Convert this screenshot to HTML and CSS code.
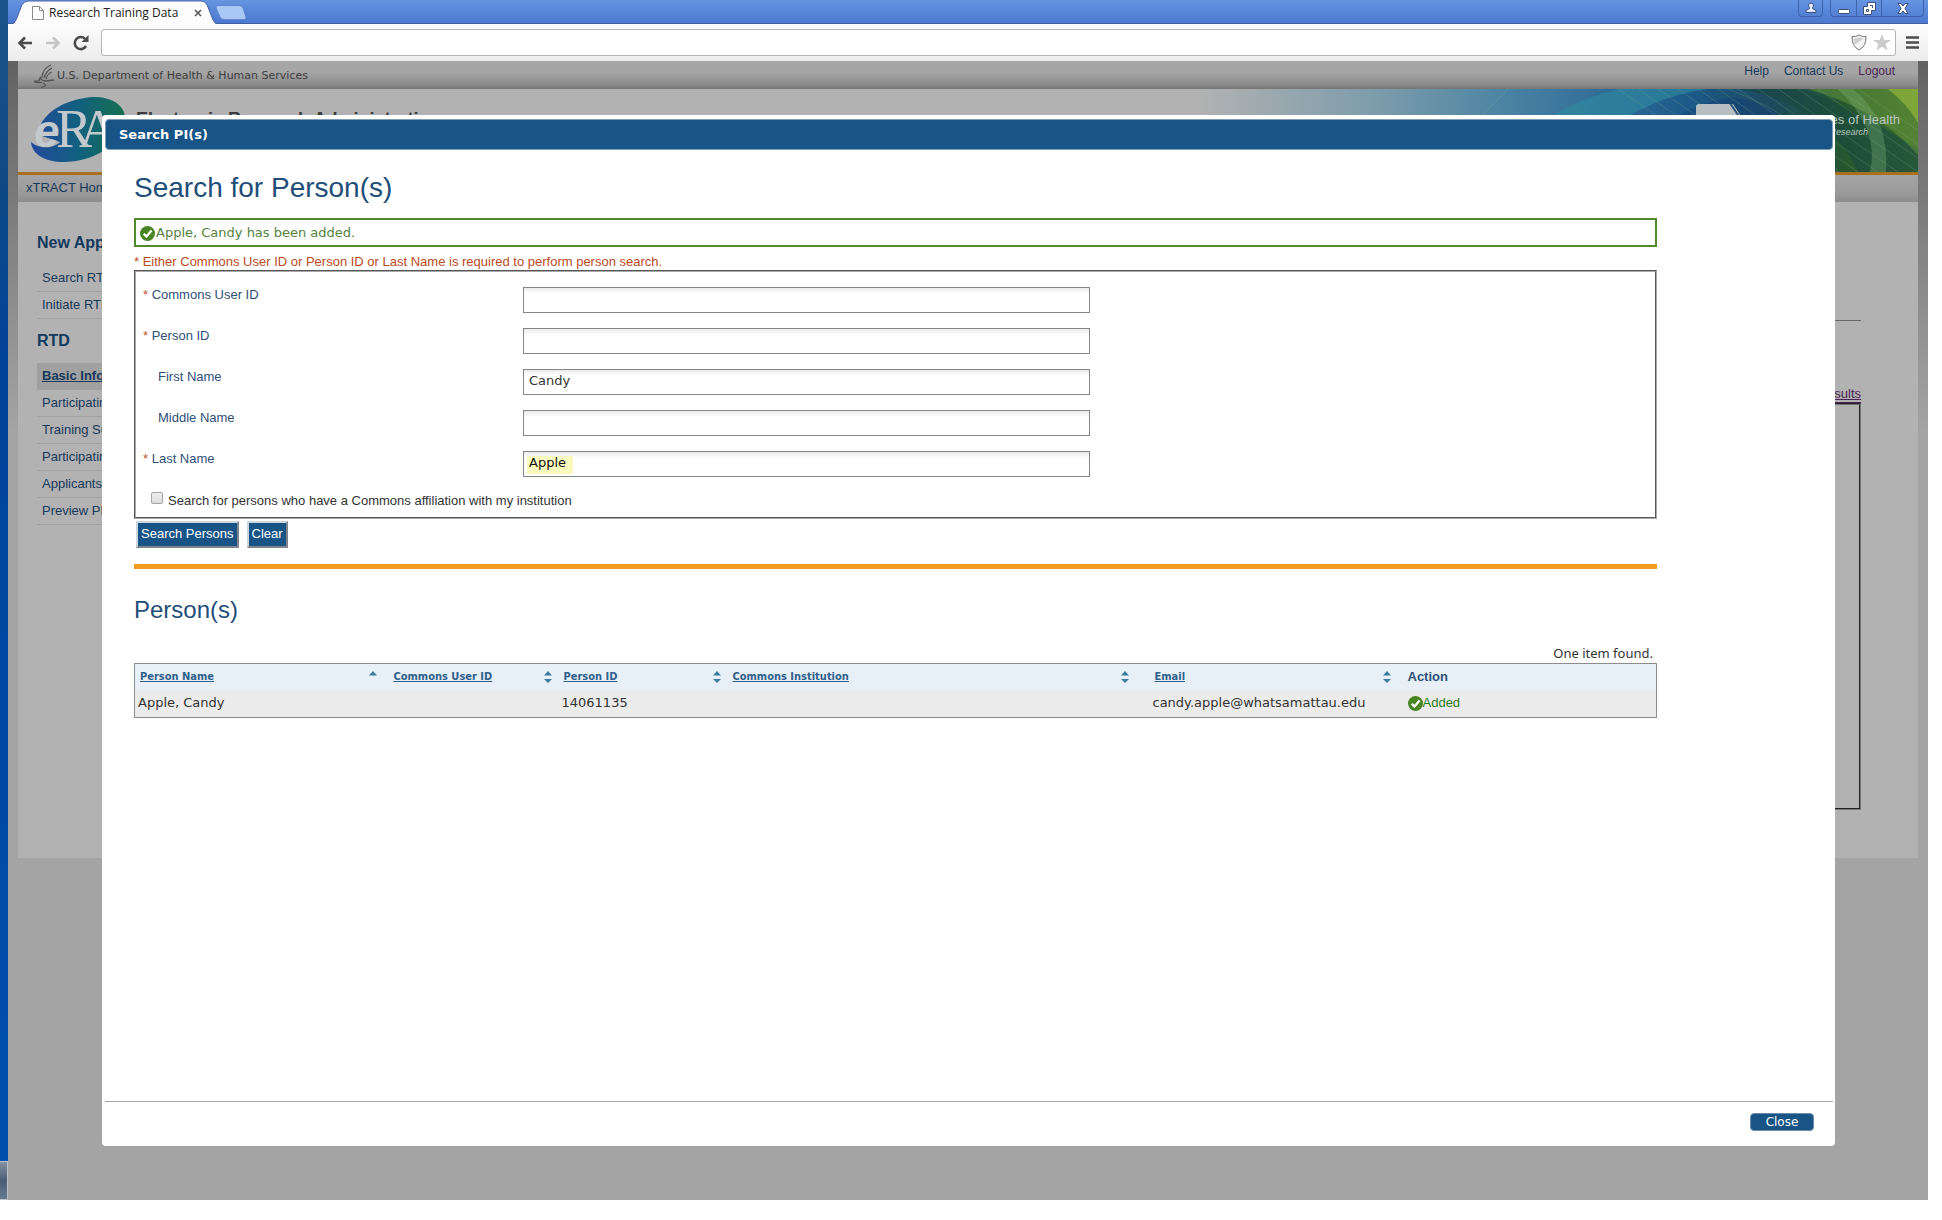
FILE: index.html
```html
<!DOCTYPE html>
<html lang="en">
<head>
    <meta charset="UTF-8">
    <meta name="viewport" content="width=device-width, initial-scale=1.0">
    <title>Research Training Data</title>
    <link rel="stylesheet" href="styles.css">
</head>
<body>
    <!-- Shared icons -->
    <svg class="defs" width="0" height="0" aria-hidden="true">
        <symbol id="check" viewBox="0 0 14 14">
            <circle cx="7" cy="7" r="7" fill="#4a8523"/>
            <path d="M3.5 7.2 6 9.8 10.8 4.2" fill="none" stroke="#fff" stroke-width="2.2"/>
        </symbol>
        <symbol id="sort" viewBox="0 0 8 12">
            <path d="M4 0 8 4.5H0zM4 12 0 8h8z" fill="#3a7ba0"/>
        </symbol>
        <symbol id="sort-up" viewBox="0 0 8 12">
            <path d="M4 0 8 4.5H0z" fill="#3a7ba0"/>
        </symbol>
    </svg>

    <div class="screen">
        <div class="desktop-edge"><div class="taskbar"></div></div>

        <div class="browser">
            <!-- Browser tab strip -->
            <div class="titlebar">
                <div class="tab">
                    <svg class="tab-shape" viewBox="0 0 212 24" preserveAspectRatio="none" aria-hidden="true">
                        <path d="M0 25C6 25 7 22 9 18L14 5Q16 1 21 1H195Q199 1 201 5L207 20Q209 24 212 25Z" fill="#fdfdfd" stroke="#4a63a0"/>
                    </svg>
                    <svg class="page-icon" width="12" height="14" viewBox="0 0 12 14" aria-hidden="true">
                        <path d="M.5.5H7.500L11.500 4.500V13.500H.5zM7.500.5V4.500H11.500" fill="#fff" stroke="#8a8a8a"/>
                    </svg>
                    <span class="tab-title">Research Training Data</span>
                    <button class="tab-close" type="button" aria-label="Close tab">
                        <svg width="8" height="8" viewBox="0 0 8 8"><path d="M1 1 7 7M7 1 1 7" stroke="#555" stroke-width="1.6"/></svg>
                    </button>
                </div>
                <button class="new-tab" type="button" aria-label="New tab">
                    <svg width="32" height="15" viewBox="0 0 32 15"><path d="M3 .5H24Q27 .5 28 3L31 12Q31.500 14.500 29 14.500H9Q6 14.500 5 12L1 3Q.5.5 3 .5Z" fill="#a9c8f5" stroke="#5f86cf"/></svg>
                </button>
                <div class="window-buttons">
                    <button type="button" class="user" aria-label="User"><svg width="12" height="12" viewBox="0 0 12 12"><path d="M6 1a2.500 2.500 0 0 1 1.500 4.500V6.500L11 8.500V10.500H1V8.500L4.500 6.500V5.500A2.500 2.500 0 0 1 6 1Z" fill="#dfe9fb" stroke="#3d4f7c"/></svg></button>
                    <div class="group">
                        <button type="button" aria-label="Minimize"><svg width="12" height="12" viewBox="0 0 12 12"><rect x=".5" y="7.500" width="11" height="4" rx="1" fill="#fff" stroke="#3d4f7c"/></svg></button>
                        <button type="button" aria-label="Restore"><svg width="13" height="13" viewBox="0 0 13 13"><path d="M4.500.5H12.500V8.500H8.500V12.500H.5V4.500H4.500Z" fill="#fff" stroke="#3d4f7c"/><path d="M3.500 7.500H5.500V9.500H3.500ZM7 3.500H9.500V6" fill="none" stroke="#3d4f7c"/></svg></button>
                        <button type="button" class="wide" aria-label="Close"><svg width="12" height="11" viewBox="0 0 12 11"><path d="M1 .5H4L6 3 8 .5H11L8 5.500 11 10.500H8L6 8 4 10.500H1L4 5.500Z" fill="#fff" stroke="#3d4f7c"/></svg></button>
                    </div>
                </div>
            </div>

            <!-- Browser toolbar -->
            <div class="toolbar">
                <button type="button" aria-label="Back"><svg width="16" height="14" viewBox="0 0 16 14"><path d="M15 7H3M8 1.500 2.500 7 8 12.500" fill="none" stroke="#4c4c4c" stroke-width="2.600"/></svg></button>
                <button type="button" aria-label="Forward"><svg width="16" height="14" viewBox="0 0 16 14"><path d="M1 7H13M8 1.500 13.500 7 8 12.500" fill="none" stroke="#c4c4c4" stroke-width="2.600"/></svg></button>
                <button type="button" aria-label="Reload"><svg width="16" height="16" viewBox="0 0 16 16"><path d="M13 11A6 6 0 1 1 12 3.800" fill="none" stroke="#4c4c4c" stroke-width="2.600"/><path d="M15.500 0V7H8.500Z" fill="#4c4c4c"/></svg></button>
                <div class="address">
                    <input type="text" aria-label="Address">
                    <svg width="16" height="17" viewBox="0 0 16 17" aria-hidden="true"><path d="M8 1Q11 3 15 2.500 15.500 12 8 16 .5 12 1 2.500 5 3 8 1Z" fill="#f4f4f4" stroke="#777"/><path d="M8 3Q10 4.500 13 4.500L3 11Q2.500 8 2.800 4.500 6 4.500 8 3Z" fill="#cfcfcf"/></svg>
                    <svg width="18" height="17" viewBox="0 0 18 17" aria-hidden="true"><path d="M9 0 11.300 6H18L12.700 10 14.600 16.500 9 12.700 3.400 16.500 5.300 10 0 6H6.700Z" fill="#ccc"/></svg>
                </div>
                <button class="menu" type="button" aria-label="Menu"><svg width="13" height="13" viewBox="0 0 13 13"><path d="M0 1.500H13M0 6.500H13M0 11.500H13" stroke="#4c4c4c" stroke-width="2.600"/></svg></button>
            </div>

            <!-- Dimmed page behind the dialog -->
            <div class="viewport">
                <div class="site">
                    <div class="hhs-bar">
                        <svg width="20" height="24" viewBox="0 0 20 24" fill="none" stroke="#555" aria-hidden="true"><path d="M17 1Q9 4 8 13M18 4Q12 7 10 14M18 8Q13 10 12 15M6 13Q7 17 12 17L20 16M8 13Q5 14 5 17L0 17.500Q3 19 8 18.500M9 19Q12 20 11 22L7 23.500" stroke-width="1.300"/></svg>
                        <span>U.S. Department of Health &amp; Human Services</span>
                        <nav class="top-links">
                            <a href="#">Help</a>
                            <a href="#">Contact Us</a>
                            <a href="#" class="visited">Logout</a>
                        </nav>
                    </div>
                    <header class="banner">
                        <svg class="era-logo" width="106" height="68" viewBox="0 0 106 68" aria-label="eRA">
                            <defs>
                                <linearGradient id="era"><stop offset="0" stop-color="#23499b"/><stop offset=".5" stop-color="#12607f"/><stop offset="1" stop-color="#16704f"/></linearGradient>
                            </defs>
                            <path d="M10 30C20 8 50 1 66 1 88 2 96 14 95 24 92 50 62 66 34 66 14 66 2 58 1 46 10 54 24 52 30 46L12 40Z" fill="url(#era)"/>
                            <text x="4" y="51" class="era-e">e</text>
                            <text x="26 49" y="51" class="era-ra">RA</text>
                        </svg>
                        <span class="site-name">Electronic Research Administration</span>
                        <div class="banner-art">
                            <svg viewBox="0 0 720 83" preserveAspectRatio="xMaxYMid slice" aria-hidden="true">
                                <defs>
                                    <linearGradient id="art"><stop offset="0" stop-color="#b2b2b2"/><stop offset=".25" stop-color="#7c9cab"/><stop offset=".45" stop-color="#4580a2"/><stop offset=".68" stop-color="#1c5a8a"/><stop offset=".8" stop-color="#1c4a5c"/><stop offset=".9" stop-color="#26572f"/><stop offset="1" stop-color="#3f7030"/></linearGradient>
                                </defs>
                                <rect width="720" height="83" fill="url(#art)"/>
                                <path d="M360 83Q430 10 510 0H420Q340 20 290 83Z" fill="#2f8aa0" opacity=".6"/>
                                <path d="M430 83Q460 20 535 8 600 20 640 83Z" fill="#123f78" opacity=".45"/>
                                <path d="M540 0Q630 15 660 83H720V60Q640 10 600 0Z" fill="#19483f" opacity=".6"/>
                                <path d="M610 0Q680 20 720 66V0Z" fill="#5f8f38" opacity=".6"/>
                                <path d="M690 0Q710 16 720 34V0Z" fill="#93b53c" opacity=".7"/>
                                <path d="M640 0Q682 40 672 83H688Q692 30 655 0Z" fill="#7ab075" opacity=".35"/>
                                <path d="M530 0Q610 30 640 83M280 30Q300 10 310 0M420 0 540 83M440 0 560 83M460 0 580 83M480 0 600 83M500 0 620 83M520 0 640 83M540 0 660 83M560 0 680 83M580 0 700 83M600 0 720 83M620 0 740 83M640 0 760 83M660 0 780 83" fill="none" stroke="#9fc6a0" opacity=".2"/>
                            </svg>
                            <svg class="nih" width="50" height="34" viewBox="0 0 50 34" aria-label="NIH"><path d="M3 0H37L48 17 37 34H3Q0 34 0 31V3Q0 0 3 0Z" fill="#b6bec2"/><path d="M34 -1 46 17" stroke="#26557a" stroke-width="2"/><text x="4" y="25" class="nih-text">NIH</text></svg>
                            <div class="nih-name">National Institutes of Health<em>Office of Extramural Research</em></div>
                        </div>
                    </header>
                    <nav class="site-nav"><a href="#">xTRACT Home</a></nav>
                    <div class="site-body">
                        <aside class="side">
                            <h2>New Application</h2>
                            <ul>
                                <li><a href="#">Search RTD</a></li>
                                <li><a href="#">Initiate RTD</a></li>
                            </ul>
                            <h2>RTD</h2>
                            <ul>
                                <li class="current"><a href="#">Basic Information</a></li>
                                <li><a href="#">Participating Faculty</a></li>
                                <li><a href="#">Training Support</a></li>
                                <li><a href="#">Participating Students</a></li>
                                <li><a href="#">Applicants</a></li>
                                <li><a href="#">Preview PDF</a></li>
                            </ul>
                        </aside>
                        <main class="behind">
                            <hr>
                            <a href="#">Search Results</a>
                            <div class="results-box"></div>
                        </main>
                    </div>
                </div>

                <!-- Search dialog -->
                <div class="dialog" role="dialog" aria-label="Search PI(s)">
                    <div class="dialog-title">Search PI(s)</div>
                    <div class="dialog-body">
                        <h1>Search for Person(s)</h1>
                        <div class="message"><svg class="check"><use href="#check"/></svg>Apple, Candy has been added.</div>
                        <p class="hint">* Either Commons User ID or Person ID or Last Name is required to perform person search.</p>
                        <form>
                            <div class="fields">
                                <div class="field">
                                    <label for="user-id"><i>*</i> Commons User ID</label>
                                    <input type="text" id="user-id">
                                </div>
                                <div class="field">
                                    <label for="person-id"><i>*</i> Person ID</label>
                                    <input type="text" id="person-id">
                                </div>
                                <div class="field">
                                    <label for="first-name" class="optional">First Name</label>
                                    <input type="text" id="first-name" value="Candy">
                                </div>
                                <div class="field">
                                    <label for="middle-name" class="optional">Middle Name</label>
                                    <input type="text" id="middle-name">
                                </div>
                                <div class="field">
                                    <label for="last-name"><i>*</i> Last Name</label>
                                    <input type="text" id="last-name" class="marked" value="Apple">
                                </div>
                                <div class="tick">
                                    <input type="checkbox" id="affiliation">
                                    <label for="affiliation">Search for persons who have a Commons affiliation with my institution</label>
                                </div>
                            </div>
                            <div class="actions">
                                <button type="button">Search Persons</button>
                                <button type="button">Clear</button>
                            </div>
                        </form>
                        <hr class="divider">
                        <h2>Person(s)</h2>
                        <p class="count">One item found.</p>
                        <table>
                            <thead>
                                <tr>
                                    <th class="c-name"><div><a href="#">Person Name</a><svg class="sort"><use href="#sort-up"/></svg></div></th>
                                    <th class="c-user"><div><a href="#">Commons User ID</a><svg class="sort"><use href="#sort"/></svg></div></th>
                                    <th class="c-id"><div><a href="#">Person ID</a><svg class="sort"><use href="#sort"/></svg></div></th>
                                    <th class="c-inst"><div><a href="#">Commons Institution</a><svg class="sort"><use href="#sort"/></svg></div></th>
                                    <th class="c-email"><div><a href="#">Email</a><svg class="sort"><use href="#sort"/></svg></div></th>
                                    <th class="c-action">Action</th>
                                </tr>
                            </thead>
                            <tbody>
                                <tr>
                                    <td>Apple, Candy</td>
                                    <td></td>
                                    <td>14061135</td>
                                    <td></td>
                                    <td>candy.apple@whatsamattau.edu</td>
                                    <td class="added"><svg class="check"><use href="#check"/></svg>Added</td>
                                </tr>
                            </tbody>
                        </table>
                    </div>
                    <div class="dialog-footer">
                        <button type="button">Close</button>
                    </div>
                </div>
            </div>
        </div>
    </div>
</body>
</html>
```
FILE: styles.css
```css
* {
    box-sizing: border-box;
}

body {
    margin: 0;
    background: #fff;
    font-family: "Liberation Sans", Arial, sans-serif;
    font-size: 13px;
    line-height: 16px;
}

h1, h2, p, ul, hr {
    margin: 0;
    padding: 0;
}

button {
    margin: 0;
    padding: 0;
    border: 0;
    background: none;
    font: inherit;
}

svg {
    display: block;
    flex: none;
}

.defs {
    position: absolute;
}

/* Whole screen with the strip of desktop at the left */
.screen {
    display: flex;
    height: calc(100vh - 20px);
    margin-right: 14px;
}

.desktop-edge {
    display: flex;
    flex: none;
    align-items: flex-end;
    width: 8px;
    background: linear-gradient(#1a5488, #0f4a85 15%, #00429a 30%, #0052ae);
}

.taskbar {
    width: 8px;
    height: 39px;
    border: 1px solid #b8c2cc;
    border-left: 0;
    background: linear-gradient(#8390a0, #4c5e75 50%, #66788c);
}

.browser {
    display: flex;
    flex: 1;
    flex-direction: column;
    min-width: 0;
}

/* Tab strip */
.titlebar {
    display: flex;
    flex: none;
    height: 24px;
    background: linear-gradient(#6594e0, #4c78cf);
    border-bottom: 1px solid #3f5fa3;
}

.tab {
    position: relative;
    display: flex;
    align-items: center;
    width: 210px;
    height: 24px;
    padding: 2px 16px 0 24px;
}

.tab-shape {
    position: absolute;
    inset: 0;
    width: 100%;
    height: 100%;
}

.page-icon, .tab-title, .tab-close {
    position: relative;
}

.tab-title {
    flex: 1;
    margin-left: 5px;
    color: #222;
    font-family: "Open Sans", sans-serif;
    font-size: 12px;
}

.new-tab {
    align-self: center;
    margin: 2px 0 0 -3px;
}

.window-buttons {
    display: flex;
    gap: 7px;
    height: 17px;
    margin-left: auto;
    margin-right: 4px;
}

.window-buttons button {
    display: flex;
    align-items: center;
    justify-content: center;
    width: 25px;
}

.window-buttons .wide {
    width: 42px;
}

.window-buttons .user, .group {
    display: flex;
    border: 1px solid #3f62ad;
    border-top: 0;
    border-radius: 0 0 4px 4px;
}

.group button + button {
    border-left: 1px solid #3f62ad;
}

/* Address bar row */
.toolbar {
    display: flex;
    flex: none;
    align-items: center;
    gap: 12px;
    height: 37px;
    padding: 0 9px;
    background: linear-gradient(#fdfdfd, #ececec);
}

.address {
    display: flex;
    flex: 1;
    align-items: center;
    gap: 6px;
    height: 27px;
    padding-right: 4px;
    border: 1px solid #b4b4b4;
    border-radius: 3px;
    background: #fff;
}

.address input {
    flex: 1;
    border: 0;
    outline: 0;
}

.menu {
    margin-left: -2px;
}

/* Dimmed page */
.viewport {
    position: relative;
    flex: 1;
    min-height: 0;
    padding: 0 10px;
    overflow: hidden;
    background: linear-gradient(#626262, #a4a4a4 370px);
}

.viewport a {
    text-decoration: none;
}

.site {
    display: flex;
    flex-direction: column;
    height: 70%;
    background: #b2b2b2;
}

.site a {
    color: #16395a;
}

.site .visited, .behind a {
    color: #4a2452;
}

.hhs-bar {
    display: flex;
    flex: none;
    align-items: center;
    gap: 3px;
    height: 28px;
    padding: 1px 23px 0 16px;
    background: linear-gradient(#a6a6a6 40%, #8a8a8a 85%, #757575);
    color: #3d3d3d;
    font-family: "DejaVu Sans", Verdana, sans-serif;
    font-size: 11px;
}

.top-links {
    display: flex;
    gap: 15px;
    margin: 0 0 9px auto;
    font-family: "Liberation Sans", Arial, sans-serif;
    font-size: 12px;
}

.banner {
    display: flex;
    flex: none;
    height: 86px;
    padding-left: 12px;
    border-bottom: 3px solid #a8701c;
}

.era-logo {
    margin-top: 7px;
}

.era-e {
    fill: #c3c8cc;
    font: italic bold 46px "Liberation Sans", sans-serif;
}

.era-ra {
    fill: #c3c8cc;
    font: 54px "Liberation Serif", serif;
}

.site-name {
    margin-top: 18px;
    color: #3a3a3a;
    font-size: 18px;
    font-weight: bold;
    line-height: 24px;
}

.banner-art {
    position: relative;
    display: flex;
    width: 720px;
    margin-left: auto;
    padding: 15px 18px 0 498px;
    color: #b9c6be;
    white-space: nowrap;
}

.banner-art > svg:first-child {
    position: absolute;
    inset: 0;
    width: 100%;
    height: 100%;
}

.nih, .nih-name {
    position: relative;
}

.nih-text {
    fill: #26557a;
    font: bold 20px "Liberation Sans", sans-serif;
}

/* The name is wider than its box and keeps its right end in place */
.nih-name {
    display: flex;
    flex: 1;
    flex-direction: column;
    align-items: flex-end;
    min-width: 0;
    padding-top: 8px;
    font-size: 13px;
}

.nih-name em {
    padding-right: 32px;
    font-size: 9px;
    line-height: 8px;
}

.site-nav {
    flex: none;
    height: 27px;
    padding: 5px 8px;
    background: linear-gradient(#a4a4a4, #9a9a9a 70%, #8c8c8c);
    font-size: 13px;
}

.site-body {
    display: flex;
    flex: 1;
    min-height: 0;
}

.side {
    width: 240px;
    padding: 31px 0 0 19px;
}

.side h2 {
    margin-bottom: 12px;
    color: #12395e;
    font-size: 16px;
    line-height: 20px;
}

.side ul {
    margin-bottom: 12px;
    list-style: none;
}

.side li {
    height: 27px;
    padding: 5px;
    border-bottom: 1px solid #a2a2a2;
}

.side .current {
    background: #a0a0a0;
    font-weight: bold;
}

.side .current a {
    text-decoration: underline;
}

.behind {
    display: flex;
    flex: 1;
    flex-direction: column;
    align-items: flex-end;
    padding: 118px 57px 48px 0;
}

.behind hr {
    width: 100%;
    margin-bottom: 65px;
    border: 0;
    border-top: 1px solid #666;
}

.behind a {
    border-bottom: 1px solid #4a2452;
    text-decoration: underline;
}

.results-box {
    flex: 1;
    width: 100%;
    border: 2px groove #777;
}

/* Dialog */
.dialog {
    position: absolute;
    top: 54px;
    right: 93px;
    bottom: 54px;
    left: 94px;
    display: flex;
    flex-direction: column;
    padding: 4px 2px 0 3px;
    border-radius: 4px;
    background: #fff;
}

.dialog-title {
    flex: none;
    height: 31px;
    padding: 7px 13px;
    border: 1px solid #7f9db8;
    border-radius: 4px;
    background: #195486;
    color: #fff;
    font-family: "DejaVu Sans", Verdana, sans-serif;
    font-size: 13px;
    font-weight: bold;
}

.dialog-body {
    flex: 1;
    padding: 21px 176px 0 29px;
}

.dialog h1, .dialog h2 {
    color: #1f4e79;
    font-weight: normal;
}

.dialog h1 {
    margin-bottom: 13px;
    font-size: 28px;
    line-height: 34px;
}

.dialog h2 {
    font-size: 24px;
    line-height: 30px;
}

.check {
    width: 15px;
    height: 15px;
}

.message {
    display: flex;
    align-items: center;
    gap: 1px;
    height: 29px;
    padding: 1px 4px 0;
    border: 2px solid #4f8a2b;
    color: #55823c;
    font-family: "DejaVu Sans", Verdana, sans-serif;
}

.hint {
    padding-top: 7px;
    color: #bb4a1d;
}

/* Search form */
.fields {
    padding: 15px 7px 8px;
    border: 2px groove #aaa;
}

.field {
    display: flex;
    height: 41px;
}

.field label {
    width: 380px;
    color: #2f5078;
}

.field i {
    color: #c0532b;
    font-style: normal;
}

.field .optional {
    padding-left: 15px;
}

.field input {
    width: 567px;
    height: 26px;
    padding: 0 5px 3px;
    border: 1px solid #868686;
    background: linear-gradient(#ebebeb, #fff 6px);
    color: #333;
    font-family: "DejaVu Sans", Verdana, sans-serif;
    font-size: 13px;
}

.field .marked {
    background: linear-gradient(#fafabf, #fafabf) 3px 4px / 46px 18px no-repeat, linear-gradient(#ebebeb, #fff 6px);
    color: #111;
}

.tick {
    display: flex;
    gap: 5px;
    padding-left: 8px;
    color: #333;
}

.tick label {
    padding-top: 1px;
}

.tick input {
    appearance: none;
    width: 12px;
    height: 12px;
    margin: 0;
    border: 1px solid #a5a5a5;
    border-radius: 2px;
    background: linear-gradient(#f0f0f0, #dcdcdc);
}

.actions {
    display: flex;
    gap: 8px;
    padding: 2px;
}

.actions button {
    height: 27px;
    padding: 0 3px 2px;
    border: 2px outset #ccd6de;
    background: #195486;
    color: #fff;
}

.divider {
    height: 5px;
    margin: 14px 0 26px;
    border: 0;
    background: #f39c1f;
}

/* Result table */
.count {
    padding: 20px 4px 2px 0;
    color: #333;
    font-family: "Noto Sans", sans-serif;
    text-align: right;
}

.dialog table {
    width: 100%;
    border: 1px solid #8c8c8c;
    border-collapse: collapse;
    table-layout: fixed;
    background: #ebebeb;
}

th {
    height: 26px;
    padding: 0 5px;
    background: #e8f0f7;
    color: #2f5078;
    text-align: left;
}

th div {
    display: flex;
    align-items: center;
    justify-content: space-between;
    padding-right: 2px;
}

th a {
    color: #2f608c;
    font-family: "DejaVu Sans Condensed", Tahoma, sans-serif;
    font-size: 11px;
}

.viewport th a {
    text-decoration: underline;
}

.sort {
    width: 8px;
    height: 12px;
}

td {
    height: 27px;
    padding: 0 3px;
    color: #333;
    font-family: "DejaVu Sans", Verdana, sans-serif;
}

.added {
    display: flex;
    align-items: center;
    padding-left: 5px;
    color: #2c7c22;
    font-family: "Liberation Sans", Arial, sans-serif;
}

.c-name {
    width: 254px;
    padding-right: 10px;
}

.c-user {
    width: 170px;
}

.c-id {
    width: 169px;
}

.c-inst {
    width: 422px;
    padding-right: 19px;
}

.c-email {
    width: 253px;
    padding-right: 10px;
}

.dialog-footer {
    display: flex;
    flex: none;
    justify-content: flex-end;
    height: 45px;
    padding: 11px 19px;
    border-top: 1px solid #a8a8a8;
}

.dialog-footer button {
    width: 64px;
    height: 18px;
    border: 1px solid #6d8dab;
    border-radius: 4px;
    background: #195486;
    color: #fff;
    font-family: "DejaVu Sans", Verdana, sans-serif;
    font-size: 12px;
    line-height: 15px;
}
```
